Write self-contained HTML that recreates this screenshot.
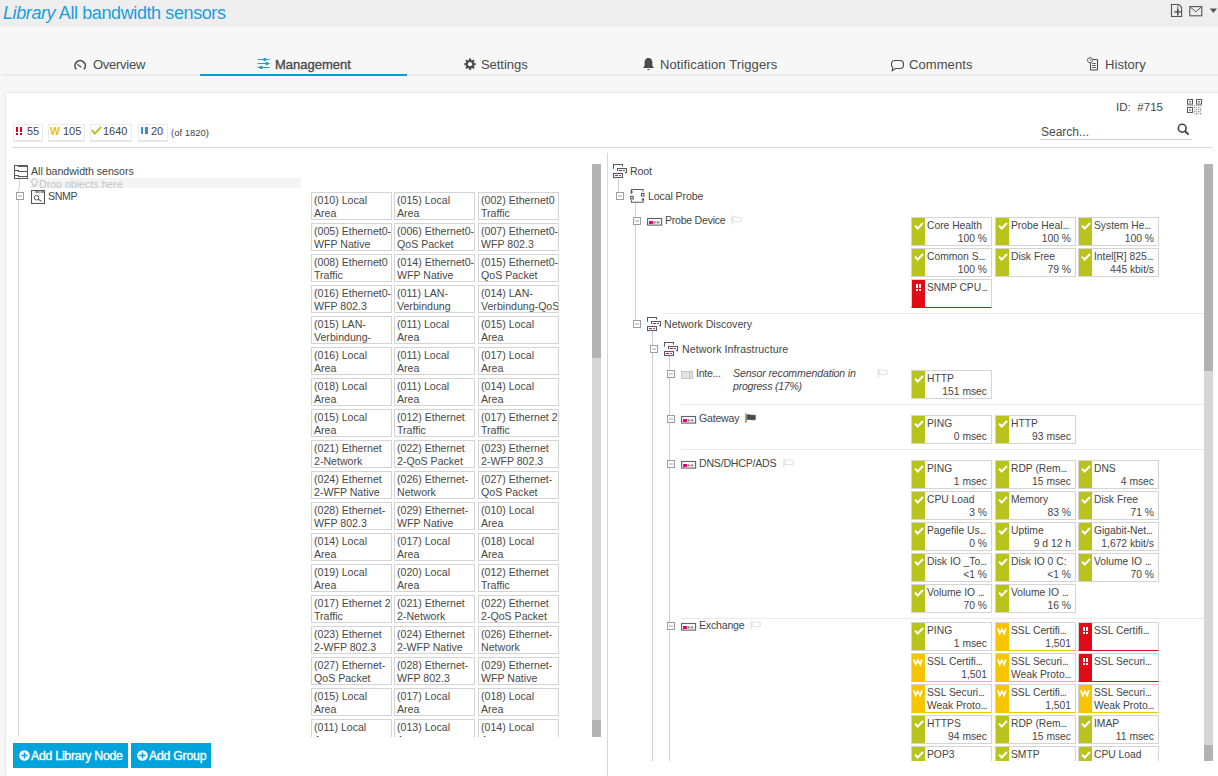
<!DOCTYPE html>
<html><head><meta charset="utf-8"><title>Library All bandwidth sensors</title>
<style>
html,body{margin:0;padding:0;}
body{width:1218px;height:776px;overflow:hidden;position:relative;background:#f7f7f7;font-family:"Liberation Sans", sans-serif;color:#3d3d3d;}
.a{position:absolute;}
.lib{width:79px;height:26px;border:1px solid #d4d4d4;font-size:10.6px;line-height:13px;color:#484848;padding:0;overflow:hidden;white-space:nowrap;}
.lib div{position:relative;left:2px;top:1px;}
.tile{width:79px;height:27px;border:1px solid #d4d4d4;background:#fff;overflow:hidden;}
.tile .bar{position:absolute;left:0;top:0;width:13px;height:28px;}
.tn{position:absolute;left:15px;top:2px;font-size:10.3px;line-height:12px;white-space:nowrap;color:#454545;}
.tv{position:absolute;top:15px;font-size:10.3px;line-height:12px;white-space:nowrap;color:#454545;}
</style></head><body>
<div class="a" style="left:0px;top:0px;width:1218px;height:27px;background:#eeeeee;"></div><div class="a" style="left:3px;top:1px;font-size:18px;letter-spacing:-0.4px;color:#1a9fdb;white-space:nowrap;line-height:24px;"><i>Library</i> All bandwidth sensors</div><svg class="a" style="left:1170px;top:3px" width="48" height="16" viewBox="0 0 48 16">
<path d="M1.5 1.5 H9 L11.6 4.3 V13.5 H1.5 Z" fill="none" stroke="#555" stroke-width="1.1"/>
<path d="M7.8 1.6 V13.4" stroke="#666" stroke-width="0.9"/>
<path d="M4.3 8.9 H11 M7.7 5.8 V12" stroke="#444" stroke-width="1.4"/>
<rect x="19.8" y="3.6" width="12" height="9.2" fill="none" stroke="#555" stroke-width="1.1"/>
<path d="M20.2 4 L25.8 8.8 L31.4 4" fill="none" stroke="#555" stroke-width="1"/>
<path d="M39.8 5.6 H47 L43.4 9.9 Z" fill="#555"/>
</svg><div class="a" style="left:2px;top:74px;width:1216px;height:2px;background:#ebebeb;"></div><div class="a" style="left:200px;top:74px;width:207px;height:2px;background:#0a9ad6;"></div><div class="a" style="left:93px;top:57px;font-size:13px;letter-spacing:-0.273px;color:#4a4a4a;line-height:16px;white-space:nowrap;">Overview</div><div class="a" style="left:275px;top:57px;font-size:13px;-webkit-text-stroke:0.35px #4a4a4a;letter-spacing:-0.009px;color:#4a4a4a;line-height:16px;white-space:nowrap;">Management</div><div class="a" style="left:481px;top:57px;font-size:13px;letter-spacing:-0.048px;color:#4a4a4a;line-height:16px;white-space:nowrap;">Settings</div><div class="a" style="left:660px;top:57px;font-size:13px;letter-spacing:0.115px;color:#4a4a4a;line-height:16px;white-space:nowrap;">Notification Triggers</div><div class="a" style="left:909px;top:57px;font-size:13px;letter-spacing:0.08px;color:#4a4a4a;line-height:16px;white-space:nowrap;">Comments</div><div class="a" style="left:1105px;top:57px;font-size:13px;letter-spacing:0.05px;color:#4a4a4a;line-height:16px;white-space:nowrap;">History</div><svg class="a" style="left:73px;top:58px" width="14" height="13" viewBox="0 0 14 13">
<path d="M3.24 11.3 A5.2 5.2 0 1 1 10.96 11.3" fill="none" stroke="#4a4a4a" stroke-width="1.6"/>
<path d="M4.2 6.3 L8.4 9.3" stroke="#4a4a4a" stroke-width="1.1"/></svg><svg class="a" style="left:257px;top:57px" width="13" height="13" viewBox="0 0 13 13">
<path d="M0.5 2.5 H12.5 M0.5 6.5 H12.5 M0.5 10.5 H12.5" stroke="#1f9fd8" stroke-width="1.2"/>
<rect x="6.5" y="1" width="2.6" height="3" fill="#1f9fd8"/>
<rect x="8.5" y="5" width="2.6" height="3" fill="#1f9fd8"/>
<rect x="2.8" y="9" width="2.6" height="3" fill="#1f9fd8"/></svg><svg class="a" style="left:464px;top:58px" width="12" height="13" viewBox="0 0 12 13">
<g fill="#4a4a4a" transform="translate(6 6.2)">
<circle r="4.2"/>
<rect x="-1.1" y="-5.7" width="2.2" height="11.4"/>
<rect x="-1.1" y="-5.7" width="2.2" height="11.4" transform="rotate(45)"/>
<rect x="-1.1" y="-5.7" width="2.2" height="11.4" transform="rotate(90)"/>
<rect x="-1.1" y="-5.7" width="2.2" height="11.4" transform="rotate(135)"/>
</g><circle cx="6" cy="6.2" r="2.1" fill="#f7f7f7"/></svg><svg class="a" style="left:642px;top:57px" width="13" height="14" viewBox="0 0 13 14">
<path d="M6.5 1 C3.5 1 2.6 3.6 2.6 6 V8.8 L1 11 H12 L10.4 8.8 V6 C10.4 3.6 9.5 1 6.5 1 Z" fill="#4a4a4a"/>
<path d="M5 12 A1.6 1.6 0 0 0 8 12 Z" fill="#4a4a4a"/></svg><svg class="a" style="left:890px;top:58px" width="15" height="14" viewBox="0 0 15 14">
<path d="M5 2.5 H10 A3.5 3.5 0 0 1 13.5 6 V7 A3.5 3.5 0 0 1 10 10.5 H5.6 L2.2 12.6 L2.8 9.6 A3.5 3.5 0 0 1 1.5 7 V6 A3.5 3.5 0 0 1 5 2.5 Z" fill="none" stroke="#4a4a4a" stroke-width="1.1"/></svg><svg class="a" style="left:1086px;top:56px" width="14" height="16" viewBox="0 0 14 16">
<rect x="4.5" y="3.5" width="7" height="10.5" rx="0.8" fill="none" stroke="#4a4a4a" stroke-width="1.1"/>
<path d="M6.2 7.5 H9.8 M6.2 9.5 H9.8 M6.2 11.5 H9.8" stroke="#4a4a4a" stroke-width="0.9"/>
<circle cx="4" cy="4.2" r="2.6" fill="#f7f7f7" stroke="#5a5a5a" stroke-width="0.9"/><path d="M4 2.8 V4.3 H5.2" fill="none" stroke="#5a5a5a" stroke-width="0.7"/></svg><div class="a" style="left:6px;top:93px;width:1218px;height:690px;background:#fff;box-shadow:0 0 3px rgba(0,0,0,0.13);"></div><div class="a" style="left:1116px;top:99px;font-size:11.6px;color:#454545;line-height:16px;white-space:pre;">ID:  #715</div><svg class="a" style="left:1186px;top:98px" width="17" height="17" viewBox="0 0 17 17">
<g fill="none" stroke="#5a5a5a" stroke-width="1"><rect x="1.5" y="1.5" width="5" height="4.6"/><rect x="10.5" y="1.5" width="5" height="4.6"/><rect x="1.5" y="9.5" width="5" height="5"/></g>
<g fill="#6a6a6a"><rect x="3.2" y="3" width="1.6" height="1.6"/><rect x="12.2" y="3" width="1.6" height="1.6"/><rect x="3.2" y="11.2" width="1.6" height="1.6"/></g>
<g fill="#8a8a8a"><rect x="1.2" y="7" width="1.2" height="1.2"/><rect x="3.4" y="7" width="1.2" height="1.2"/><rect x="5.6" y="7" width="1.2" height="1.2"/><rect x="7.8" y="7" width="1.2" height="1.2"/><rect x="10" y="7" width="1.2" height="1.2"/><rect x="12.2" y="7" width="1.2" height="1.2"/><rect x="14.4" y="7" width="1.2" height="1.2"/><rect x="8" y="9" width="1.3" height="1.3"/><rect x="10" y="9" width="1.3" height="1.3" opacity="0.5"/><rect x="12" y="9" width="1.3" height="1.3"/><rect x="14" y="9" width="1.3" height="1.3" opacity="0.5"/><rect x="8" y="11" width="1.3" height="1.3" opacity="0.5"/><rect x="10" y="11" width="1.3" height="1.3"/><rect x="12" y="11" width="1.3" height="1.3" opacity="0.5"/><rect x="14" y="11" width="1.3" height="1.3"/><rect x="8" y="13" width="1.3" height="1.3"/><rect x="10" y="13" width="1.3" height="1.3" opacity="0.5"/><rect x="12" y="13" width="1.3" height="1.3"/><rect x="14" y="13" width="1.3" height="1.3" opacity="0.5"/><rect x="8" y="15" width="1.3" height="1.3" opacity="0.5"/><rect x="10" y="15" width="1.3" height="1.3"/><rect x="12" y="15" width="1.3" height="1.3" opacity="0.5"/><rect x="14" y="15" width="1.3" height="1.3"/></g></svg><div class="a" style="left:1041px;top:125px;font-size:12px;color:#4a4a4a;line-height:14px;">Search...</div><div class="a" style="left:1040px;top:139px;width:152px;height:1px;background:#cfcfcf;"></div><svg class="a" style="left:1177px;top:123px" width="13" height="13" viewBox="0 0 13 13">
<circle cx="5.2" cy="5.2" r="3.9" fill="none" stroke="#444" stroke-width="1.6"/>
<path d="M8 8 L11.6 11.6" stroke="#444" stroke-width="2"/></svg><div class="a" style="left:13px;top:124px;width:28px;height:15px;border:1px solid #ebebeb;border-bottom:2px solid #e6e6e6;background:#fff;"></div><div class="a" style="left:48px;top:124px;width:35px;height:15px;border:1px solid #ebebeb;border-bottom:2px solid #e6e6e6;background:#fff;"></div><div class="a" style="left:90px;top:124px;width:40px;height:15px;border:1px solid #ebebeb;border-bottom:2px solid #e6e6e6;background:#fff;"></div><div class="a" style="left:138px;top:124px;width:28px;height:15px;border:1px solid #ebebeb;border-bottom:2px solid #e6e6e6;background:#fff;"></div><div class="a" style="left:16px;top:127px;width:2.4px;height:5.2px;background:#e3001b;"></div><div class="a" style="left:16px;top:133px;width:2.4px;height:2px;background:#e3001b;"></div><div class="a" style="left:20px;top:127px;width:2.4px;height:5.2px;background:#e3001b;"></div><div class="a" style="left:20px;top:133px;width:2.4px;height:2px;background:#e3001b;"></div><div class="a" style="left:27px;top:124px;font-size:11px;line-height:14px;color:#454545;white-space:nowrap;">55</div><div class="a" style="left:50px;top:124px;font-size:11px;line-height:14px;color:#454545;white-space:nowrap;"><b style="color:#f5bd00;font-size:10.5px">W</b>&nbsp;105</div><svg class="a" style="left:91px;top:126px" width="11" height="9" viewBox="0 0 11 9"><path d="M0.8 4.2 L3.8 7.6 L10.2 0.8" fill="none" stroke="#b0bf1e" stroke-width="1.8"/></svg><div class="a" style="left:103px;top:124px;font-size:11px;line-height:14px;color:#454545;white-space:nowrap;">1640</div><div class="a" style="left:141px;top:127px;width:2.4px;height:7px;background:#3f8bd6;"></div><div class="a" style="left:145.4px;top:127px;width:2.4px;height:7px;background:#3f8bd6;"></div><div class="a" style="left:151px;top:124px;font-size:11px;line-height:14px;color:#454545;white-space:nowrap;">20</div><div class="a" style="left:171px;top:127px;font-size:9.5px;line-height:12px;color:#454545;white-space:nowrap;">(of 1820)</div><div class="a" style="left:13px;top:147px;width:1200px;height:1px;background:#d9d9d9;"></div><div class="a" style="left:607px;top:153px;width:1px;height:623px;background:#d6d6d6;"></div><div class="a" style="left:592px;top:164px;width:9px;height:573px;background:#d6d6d6;"></div><div class="a" style="left:592px;top:164px;width:9px;height:194px;background:#b3b3b3;"></div><div class="a" style="left:592px;top:720px;width:9px;height:17px;background:#b3b3b3;"></div><svg class="a" style="left:14px;top:165px" width="14" height="14" viewBox="0 0 14 14">
<g fill="none" stroke="#5a5a5a" stroke-width="1.1"><rect x="0.5" y="0.5" width="13" height="13"/>
<path d="M4.5 0.5 V1.5 H13.5 M0.5 5.5 H4.5 V6.5 H13.5 M0.5 10.5 H4.5 V11.5 H13.5"/></g></svg><div class="a" style="left:31px;top:165px;font-size:10.6px;line-height:13px;color:#454545;white-space:nowrap;letter-spacing:-0.013px;">All bandwidth sensors</div><div class="a" style="left:30px;top:178px;width:271px;height:10px;background:#f4f4f4;overflow:hidden;"><div style="position:absolute;left:9px;top:0px;font-size:10.6px;line-height:13px;color:#c4c4c4;white-space:nowrap;">Drop objects here</div><svg style="position:absolute;left:1px;top:0px" width="7" height="10" viewBox="0 0 7 10"><path d="M3.5 0.8 A2.7 2.7 0 0 1 5.3 5.6 V7.2 H1.7 V5.6 A2.7 2.7 0 0 1 3.5 0.8 Z" fill="none" stroke="#c4c4c4" stroke-width="1"/><path d="M2.3 8.6 H4.7" stroke="#c4c4c4" stroke-width="1"/></svg></div><div class="a" style="left:19px;top:179px;width:1px;height:9px;background:#d4d4d4;"></div><div class="a" style="left:18px;top:189px;width:1px;height:3px;background:#d4d4d4;"></div><div class="a" style="left:18px;top:200px;width:1px;height:537px;background:#d4d4d4;"></div><div class="a" style="left:16px;top:192px;width:6px;height:6px;border:1px solid #9e9e9e;background:#fff;"><div style="position:absolute;left:1px;top:2px;width:4px;height:2px;background:#d0d0d0"></div></div><svg class="a" style="left:31px;top:190px" width="14" height="14" viewBox="0 0 14 14">
<rect x="0.5" y="0.5" width="13" height="13" fill="none" stroke="#555" stroke-width="1.1"/>
<path d="M4 2 H8.6 M9.6 2 H13" stroke="#777" stroke-width="1.6"/>
<circle cx="5.6" cy="7.7" r="2.3" fill="none" stroke="#555" stroke-width="1"/>
<path d="M7.3 9.3 L10.6 11.4" stroke="#555" stroke-width="1.1"/></svg><div class="a" style="left:48px;top:190px;font-size:10.6px;line-height:13px;color:#454545;white-space:nowrap;letter-spacing:-0.327px;">SNMP</div><div class="a" style="left:300px;top:150px;width:290px;height:587px;overflow:hidden;"><div class="a lib" style="left:11px;top:42px;"><div>(010) Local</div><div>Area</div></div><div class="a lib" style="left:94px;top:42px;"><div>(015) Local</div><div>Area</div></div><div class="a lib" style="left:178px;top:42px;"><div>(002) Ethernet0</div><div>Traffic</div></div><div class="a lib" style="left:11px;top:73px;"><div>(005) Ethernet0-</div><div>WFP Native</div></div><div class="a lib" style="left:94px;top:73px;"><div>(006) Ethernet0-</div><div>QoS Packet</div></div><div class="a lib" style="left:178px;top:73px;"><div>(007) Ethernet0-</div><div>WFP 802.3</div></div><div class="a lib" style="left:11px;top:104px;"><div>(008) Ethernet0</div><div>Traffic</div></div><div class="a lib" style="left:94px;top:104px;"><div>(014) Ethernet0-</div><div>WFP Native</div></div><div class="a lib" style="left:178px;top:104px;"><div>(015) Ethernet0-</div><div>QoS Packet</div></div><div class="a lib" style="left:11px;top:135px;"><div>(016) Ethernet0-</div><div>WFP 802.3</div></div><div class="a lib" style="left:94px;top:135px;"><div>(011) LAN-</div><div>Verbindung</div></div><div class="a lib" style="left:178px;top:135px;"><div>(014) LAN-</div><div>Verbindung-QoS</div></div><div class="a lib" style="left:11px;top:166px;"><div>(015) LAN-</div><div>Verbindung-</div></div><div class="a lib" style="left:94px;top:166px;"><div>(011) Local</div><div>Area</div></div><div class="a lib" style="left:178px;top:166px;"><div>(015) Local</div><div>Area</div></div><div class="a lib" style="left:11px;top:197px;"><div>(016) Local</div><div>Area</div></div><div class="a lib" style="left:94px;top:197px;"><div>(011) Local</div><div>Area</div></div><div class="a lib" style="left:178px;top:197px;"><div>(017) Local</div><div>Area</div></div><div class="a lib" style="left:11px;top:228px;"><div>(018) Local</div><div>Area</div></div><div class="a lib" style="left:94px;top:228px;"><div>(011) Local</div><div>Area</div></div><div class="a lib" style="left:178px;top:228px;"><div>(014) Local</div><div>Area</div></div><div class="a lib" style="left:11px;top:259px;"><div>(015) Local</div><div>Area</div></div><div class="a lib" style="left:94px;top:259px;"><div>(012) Ethernet</div><div>Traffic</div></div><div class="a lib" style="left:178px;top:259px;"><div>(017) Ethernet 2</div><div>Traffic</div></div><div class="a lib" style="left:11px;top:290px;"><div>(021) Ethernet</div><div>2-Network</div></div><div class="a lib" style="left:94px;top:290px;"><div>(022) Ethernet</div><div>2-QoS Packet</div></div><div class="a lib" style="left:178px;top:290px;"><div>(023) Ethernet</div><div>2-WFP 802.3</div></div><div class="a lib" style="left:11px;top:321px;"><div>(024) Ethernet</div><div>2-WFP Native</div></div><div class="a lib" style="left:94px;top:321px;"><div>(026) Ethernet-</div><div>Network</div></div><div class="a lib" style="left:178px;top:321px;"><div>(027) Ethernet-</div><div>QoS Packet</div></div><div class="a lib" style="left:11px;top:352px;"><div>(028) Ethernet-</div><div>WFP 802.3</div></div><div class="a lib" style="left:94px;top:352px;"><div>(029) Ethernet-</div><div>WFP Native</div></div><div class="a lib" style="left:178px;top:352px;"><div>(010) Local</div><div>Area</div></div><div class="a lib" style="left:11px;top:383px;"><div>(014) Local</div><div>Area</div></div><div class="a lib" style="left:94px;top:383px;"><div>(017) Local</div><div>Area</div></div><div class="a lib" style="left:178px;top:383px;"><div>(018) Local</div><div>Area</div></div><div class="a lib" style="left:11px;top:414px;"><div>(019) Local</div><div>Area</div></div><div class="a lib" style="left:94px;top:414px;"><div>(020) Local</div><div>Area</div></div><div class="a lib" style="left:178px;top:414px;"><div>(012) Ethernet</div><div>Traffic</div></div><div class="a lib" style="left:11px;top:445px;"><div>(017) Ethernet 2</div><div>Traffic</div></div><div class="a lib" style="left:94px;top:445px;"><div>(021) Ethernet</div><div>2-Network</div></div><div class="a lib" style="left:178px;top:445px;"><div>(022) Ethernet</div><div>2-QoS Packet</div></div><div class="a lib" style="left:11px;top:476px;"><div>(023) Ethernet</div><div>2-WFP 802.3</div></div><div class="a lib" style="left:94px;top:476px;"><div>(024) Ethernet</div><div>2-WFP Native</div></div><div class="a lib" style="left:178px;top:476px;"><div>(026) Ethernet-</div><div>Network</div></div><div class="a lib" style="left:11px;top:507px;"><div>(027) Ethernet-</div><div>QoS Packet</div></div><div class="a lib" style="left:94px;top:507px;"><div>(028) Ethernet-</div><div>WFP 802.3</div></div><div class="a lib" style="left:178px;top:507px;"><div>(029) Ethernet-</div><div>WFP Native</div></div><div class="a lib" style="left:11px;top:538px;"><div>(015) Local</div><div>Area</div></div><div class="a lib" style="left:94px;top:538px;"><div>(017) Local</div><div>Area</div></div><div class="a lib" style="left:178px;top:538px;"><div>(018) Local</div><div>Area</div></div><div class="a lib" style="left:11px;top:569px;"><div>(011) Local</div><div>Area</div></div><div class="a lib" style="left:94px;top:569px;"><div>(013) Local</div><div>Area</div></div><div class="a lib" style="left:178px;top:569px;"><div>(014) Local</div><div>Area</div></div></div><div class="a" style="left:13px;top:743px;width:115px;height:25px;background:#00a4dc;"></div><svg class="a" style="left:19px;top:750px" width="11" height="11" viewBox="0 0 11 11"><circle cx="5.5" cy="5.5" r="5.3" fill="#fff"/><path d="M5.5 2.4 V8.6 M2.4 5.5 H8.6" stroke="#00a4dc" stroke-width="1.6"/></svg><div class="a" style="left:31px;top:748px;font-size:12.3px;font-weight:normal;-webkit-text-stroke:0.35px #fff;color:#fff;line-height:16px;white-space:nowrap;letter-spacing:-0.25px;">Add Library Node</div><div class="a" style="left:131px;top:743px;width:80px;height:25px;background:#00a4dc;"></div><svg class="a" style="left:137px;top:750px" width="11" height="11" viewBox="0 0 11 11"><circle cx="5.5" cy="5.5" r="5.3" fill="#fff"/><path d="M5.5 2.4 V8.6 M2.4 5.5 H8.6" stroke="#00a4dc" stroke-width="1.6"/></svg><div class="a" style="left:149px;top:748px;font-size:12.3px;font-weight:normal;-webkit-text-stroke:0.35px #fff;color:#fff;line-height:16px;white-space:nowrap;letter-spacing:-0.25px;">Add Group</div><div class="a" style="left:1204px;top:164px;width:9px;height:597px;background:#d6d6d6;"></div><div class="a" style="left:1204px;top:164px;width:9px;height:207px;background:#b3b3b3;"></div><div class="a" style="left:1204px;top:745px;width:9px;height:16px;background:#b3b3b3;"></div><svg class="a" style="left:613px;top:164px" width="15" height="15" viewBox="0 0 15 15">
<g fill="none" stroke="#5a5a5a" stroke-width="1.1"><path d="M0.5 4.7 V0.5 H9.5 V2.4"/><path d="M4.5 7 V4.5 H13.5 V8.6 H12"/><rect x="0.5" y="9.5" width="9" height="4"/></g>
<path d="M6 6.5 H9 M2 11.5 H5" stroke="#e6007e" stroke-width="1.1"/><path d="M10 6.5 H12 M6.2 11.5 H8" stroke="#5a5a5a" stroke-width="1.1"/></svg><div class="a" style="left:630px;top:165px;font-size:10.6px;line-height:13px;color:#454545;white-space:nowrap;letter-spacing:-0.123px;">Root</div><div class="a" style="left:618px;top:179px;width:1px;height:13px;background:#cfcfcf;"></div><div class="a" style="left:616px;top:192px;width:6px;height:6px;border:1px solid #9e9e9e;background:#fff;"><div style="position:absolute;left:1px;top:2px;width:4px;height:2px;background:#d0d0d0"></div></div><svg class="a" style="left:630px;top:189px" width="15" height="15" viewBox="0 0 15 15">
<g fill="none" stroke="#5a5a5a" stroke-width="1.1"><path d="M1.5 3 V0.5 H13 V2.5"/><path d="M1.5 11.2 V13.2 H13 V10.5"/><rect x="0.6" y="7.4" width="2.6" height="2.6"/><rect x="11.4" y="4.4" width="2.6" height="2.6"/></g>
<path d="M-0.2 2.4 L1.5 5.2 L3.2 2.4 Z M11.3 11.2 L13 8.4 L14.7 11.2 Z" fill="#5a5a5a"/></svg><div class="a" style="left:648px;top:190px;font-size:10.6px;line-height:13px;color:#454545;white-space:nowrap;letter-spacing:-0.122px;">Local Probe</div><div class="a" style="left:635px;top:203px;width:1px;height:14px;background:#cfcfcf;"></div><div class="a" style="left:635px;top:225px;width:1px;height:95px;background:#cfcfcf;"></div><div class="a" style="left:633px;top:217px;width:6px;height:6px;border:1px solid #9e9e9e;background:#fff;"><div style="position:absolute;left:1px;top:2px;width:4px;height:2px;background:#d0d0d0"></div></div><svg class="a" style="left:647px;top:217px" width="16" height="9" viewBox="0 0 16 9">
<rect x="0.6" y="1.5" width="14" height="6.6" fill="#fff" stroke="#616161" stroke-width="1.1"/>
<rect x="2" y="4" width="4" height="3" fill="#e6007e"/><rect x="6" y="4" width="7" height="3" fill="#dedede"/>
<circle cx="7.6" cy="5.3" r="0.9" fill="#666"/><circle cx="11" cy="5.3" r="0.9" fill="#666"/></svg><div class="a" style="left:665px;top:214px;font-size:10.6px;line-height:13px;color:#454545;white-space:nowrap;letter-spacing:-0.266px;">Probe Device</div><svg class="a" style="left:731px;top:215px" width="12" height="10" viewBox="0 0 12 10">
<path d="M1 0.4 V9.8" stroke="#dadada" stroke-width="1"/><path d="M2.2 2 C4 1.2 5.5 2.8 10.2 2.2 V6.6 C6 7.4 4 5.8 2.2 6.6 Z" fill="none" stroke="#dadada" stroke-width="0.9"/></svg><div class="a" style="left:663px;top:313px;width:541px;height:1px;background:#eaeaea;"></div><div class="a" style="left:633px;top:320px;width:6px;height:6px;border:1px solid #9e9e9e;background:#fff;"><div style="position:absolute;left:1px;top:2px;width:4px;height:2px;background:#d0d0d0"></div></div><svg class="a" style="left:647px;top:317px" width="15" height="15" viewBox="0 0 15 15">
<g fill="none" stroke="#5a5a5a" stroke-width="1.1"><path d="M0.5 4.7 V0.5 H9.5 V2.4"/><path d="M4.5 7 V4.5 H13.5 V8.6 H12"/><rect x="0.5" y="9.5" width="9" height="4"/></g>
<path d="M6 6.5 H9 M2 11.5 H5" stroke="#e6007e" stroke-width="1.1"/><path d="M10 6.5 H12 M6.2 11.5 H8" stroke="#5a5a5a" stroke-width="1.1"/></svg><div class="a" style="left:664px;top:318px;font-size:10.6px;line-height:13px;color:#454545;white-space:nowrap;letter-spacing:-0.013px;">Network Discovery</div><div class="a" style="left:652px;top:331px;width:1px;height:14px;background:#cfcfcf;"></div><div class="a" style="left:652px;top:353px;width:1px;height:408px;background:#cfcfcf;"></div><div class="a" style="left:650px;top:345px;width:6px;height:6px;border:1px solid #9e9e9e;background:#fff;"><div style="position:absolute;left:1px;top:2px;width:4px;height:2px;background:#d0d0d0"></div></div><svg class="a" style="left:664px;top:342px" width="15" height="15" viewBox="0 0 15 15">
<g fill="none" stroke="#5a5a5a" stroke-width="1.1"><path d="M0.5 4.7 V0.5 H9.5 V2.4"/><path d="M4.5 7 V4.5 H13.5 V8.6 H12"/><rect x="0.5" y="9.5" width="9" height="4"/></g>
<path d="M6 6.5 H9 M2 11.5 H5" stroke="#e6007e" stroke-width="1.1"/><path d="M10 6.5 H12 M6.2 11.5 H8" stroke="#5a5a5a" stroke-width="1.1"/></svg><div class="a" style="left:682px;top:343px;font-size:10.6px;line-height:13px;color:#454545;white-space:nowrap;letter-spacing:0.095px;">Network Infrastructure</div><div class="a" style="left:669px;top:356px;width:1px;height:14px;background:#cfcfcf;"></div><div class="a" style="left:669px;top:378px;width:1px;height:383px;background:#cfcfcf;"></div><div class="a" style="left:667px;top:370px;width:6px;height:6px;border:1px solid #9e9e9e;background:#fff;"><div style="position:absolute;left:1px;top:2px;width:4px;height:2px;background:#d0d0d0"></div></div><svg class="a" style="left:681px;top:371px" width="13" height="9" viewBox="0 0 13 9"><rect x="0.5" y="0.5" width="11" height="7" fill="#e4e4e4" stroke="#c4c4c4"/><path d="M8.8 0.5 V7.5" stroke="#b8b8b8" stroke-width="1"/></svg><div class="a" style="left:696px;top:367px;font-size:10.6px;line-height:13px;color:#454545;white-space:nowrap;letter-spacing:-0.257px;">Inte...</div><div class="a" style="left:733px;top:367px;font-size:10.6px;line-height:12.7px;color:#454545;font-style:italic;white-space:nowrap;"><span style="letter-spacing:-0.159px">Sensor recommendation in</span><br><span style="letter-spacing:-0.252px">progress (17%)</span></div><svg class="a" style="left:877px;top:368px" width="12" height="10" viewBox="0 0 12 10">
<path d="M1 0.4 V9.8" stroke="#dadada" stroke-width="1"/><path d="M2.2 2 C4 1.2 5.5 2.8 10.2 2.2 V6.6 C6 7.4 4 5.8 2.2 6.6 Z" fill="none" stroke="#dadada" stroke-width="0.9"/></svg><div class="a" style="left:681px;top:404px;width:523px;height:1px;background:#eaeaea;"></div><div class="a" style="left:667px;top:415px;width:6px;height:6px;border:1px solid #9e9e9e;background:#fff;"><div style="position:absolute;left:1px;top:2px;width:4px;height:2px;background:#d0d0d0"></div></div><svg class="a" style="left:681px;top:415px" width="16" height="9" viewBox="0 0 16 9">
<rect x="0.6" y="1.5" width="14" height="6.6" fill="#fff" stroke="#616161" stroke-width="1.1"/>
<rect x="2" y="4" width="4" height="3" fill="#e6007e"/><rect x="6" y="4" width="7" height="3" fill="#dedede"/>
<circle cx="7.6" cy="5.3" r="0.9" fill="#666"/><circle cx="11" cy="5.3" r="0.9" fill="#666"/></svg><div class="a" style="left:699px;top:412px;font-size:10.6px;line-height:13px;color:#454545;white-space:nowrap;letter-spacing:-0.23px;">Gateway</div><svg class="a" style="left:745px;top:413px" width="12" height="10" viewBox="0 0 12 10">
<path d="M1 0.4 V9.8" stroke="#4a4a4a" stroke-width="1"/><path d="M2.2 2 C4 1.2 5.5 2.8 10.2 2.2 V6.6 C6 7.4 4 5.8 2.2 6.6 Z" fill="#4a4a4a" stroke="#4a4a4a" stroke-width="0.9"/></svg><div class="a" style="left:681px;top:449px;width:523px;height:1px;background:#eaeaea;"></div><div class="a" style="left:667px;top:460px;width:6px;height:6px;border:1px solid #9e9e9e;background:#fff;"><div style="position:absolute;left:1px;top:2px;width:4px;height:2px;background:#d0d0d0"></div></div><svg class="a" style="left:681px;top:460px" width="16" height="9" viewBox="0 0 16 9">
<rect x="0.6" y="1.5" width="14" height="6.6" fill="#fff" stroke="#616161" stroke-width="1.1"/>
<rect x="2" y="4" width="4" height="3" fill="#e6007e"/><rect x="6" y="4" width="7" height="3" fill="#dedede"/>
<circle cx="7.6" cy="5.3" r="0.9" fill="#666"/><circle cx="11" cy="5.3" r="0.9" fill="#666"/></svg><div class="a" style="left:699px;top:457px;font-size:10.6px;line-height:13px;color:#454545;white-space:nowrap;letter-spacing:-0.23px;">DNS/DHCP/ADS</div><svg class="a" style="left:783px;top:458px" width="12" height="10" viewBox="0 0 12 10">
<path d="M1 0.4 V9.8" stroke="#dadada" stroke-width="1"/><path d="M2.2 2 C4 1.2 5.5 2.8 10.2 2.2 V6.6 C6 7.4 4 5.8 2.2 6.6 Z" fill="none" stroke="#dadada" stroke-width="0.9"/></svg><div class="a" style="left:681px;top:618px;width:523px;height:1px;background:#eaeaea;"></div><div class="a" style="left:667px;top:622px;width:6px;height:6px;border:1px solid #9e9e9e;background:#fff;"><div style="position:absolute;left:1px;top:2px;width:4px;height:2px;background:#d0d0d0"></div></div><svg class="a" style="left:681px;top:622px" width="16" height="9" viewBox="0 0 16 9">
<rect x="0.6" y="1.5" width="14" height="6.6" fill="#fff" stroke="#616161" stroke-width="1.1"/>
<rect x="2" y="4" width="4" height="3" fill="#e6007e"/><rect x="6" y="4" width="7" height="3" fill="#dedede"/>
<circle cx="7.6" cy="5.3" r="0.9" fill="#666"/><circle cx="11" cy="5.3" r="0.9" fill="#666"/></svg><div class="a" style="left:699px;top:619px;font-size:10.6px;line-height:13px;color:#454545;white-space:nowrap;letter-spacing:-0.203px;">Exchange</div><svg class="a" style="left:750px;top:620px" width="12" height="10" viewBox="0 0 12 10">
<path d="M1 0.4 V9.8" stroke="#dadada" stroke-width="1"/><path d="M2.2 2 C4 1.2 5.5 2.8 10.2 2.2 V6.6 C6 7.4 4 5.8 2.2 6.6 Z" fill="none" stroke="#dadada" stroke-width="0.9"/></svg><div class="a" style="left:911px;top:217px;width:260px;height:93px;overflow:hidden;"><div class="a tile" style="left:0px;top:0px;"><div class="bar" style="background:#b8c41b"></div><svg style="position:absolute;left:2px;top:4px" width="10" height="8" viewBox="0 0 10 8"><path d="M1 3.6 L3.7 6.5 L9 1" fill="none" stroke="#fff" stroke-width="2"/></svg><div class="tn">Core Health</div><div class="tv" style="right:4px;text-align:right;">100 %</div></div><div class="a tile" style="left:84px;top:0px;"><div class="bar" style="background:#b8c41b"></div><svg style="position:absolute;left:2px;top:4px" width="10" height="8" viewBox="0 0 10 8"><path d="M1 3.6 L3.7 6.5 L9 1" fill="none" stroke="#fff" stroke-width="2"/></svg><div class="tn">Probe Heal<span style="letter-spacing:-0.9px">...</span></div><div class="tv" style="right:4px;text-align:right;">100 %</div></div><div class="a tile" style="left:167px;top:0px;"><div class="bar" style="background:#b8c41b"></div><svg style="position:absolute;left:2px;top:4px" width="10" height="8" viewBox="0 0 10 8"><path d="M1 3.6 L3.7 6.5 L9 1" fill="none" stroke="#fff" stroke-width="2"/></svg><div class="tn">System He<span style="letter-spacing:-0.9px">...</span></div><div class="tv" style="right:4px;text-align:right;">100 %</div></div><div class="a tile" style="left:0px;top:31px;"><div class="bar" style="background:#b8c41b"></div><svg style="position:absolute;left:2px;top:4px" width="10" height="8" viewBox="0 0 10 8"><path d="M1 3.6 L3.7 6.5 L9 1" fill="none" stroke="#fff" stroke-width="2"/></svg><div class="tn">Common S<span style="letter-spacing:-0.9px">...</span></div><div class="tv" style="right:4px;text-align:right;">100 %</div></div><div class="a tile" style="left:84px;top:31px;"><div class="bar" style="background:#b8c41b"></div><svg style="position:absolute;left:2px;top:4px" width="10" height="8" viewBox="0 0 10 8"><path d="M1 3.6 L3.7 6.5 L9 1" fill="none" stroke="#fff" stroke-width="2"/></svg><div class="tn">Disk Free</div><div class="tv" style="right:4px;text-align:right;">79 %</div></div><div class="a tile" style="left:167px;top:31px;"><div class="bar" style="background:#b8c41b"></div><svg style="position:absolute;left:2px;top:4px" width="10" height="8" viewBox="0 0 10 8"><path d="M1 3.6 L3.7 6.5 L9 1" fill="none" stroke="#fff" stroke-width="2"/></svg><div class="tn">Intel[R] 825<span style="letter-spacing:-0.9px">...</span></div><div class="tv" style="right:4px;text-align:right;">445 kbit/s</div></div><div class="a tile" style="left:0px;top:62px;border-bottom:1px solid #e20a14;"><div class="bar" style="background:#e20a14"></div><div style="position:absolute;left:4px;top:4px;width:2px;height:4.2px;background:#fff"></div><div style="position:absolute;left:4px;top:9.3px;width:2px;height:1.8px;background:#fff"></div><div style="position:absolute;left:7px;top:4px;width:2px;height:4.2px;background:#fff"></div><div style="position:absolute;left:7px;top:9.3px;width:2px;height:1.8px;background:#fff"></div><div class="tn">SNMP CPU<span style="letter-spacing:-0.9px">...</span></div><div class="tv" style="right:4px;text-align:right;"></div></div></div><div class="a" style="left:911px;top:370px;width:260px;height:31px;overflow:hidden;"><div class="a tile" style="left:0px;top:0px;"><div class="bar" style="background:#b8c41b"></div><svg style="position:absolute;left:2px;top:4px" width="10" height="8" viewBox="0 0 10 8"><path d="M1 3.6 L3.7 6.5 L9 1" fill="none" stroke="#fff" stroke-width="2"/></svg><div class="tn">HTTP</div><div class="tv" style="right:4px;text-align:right;">151 msec</div></div></div><div class="a" style="left:911px;top:415px;width:260px;height:31px;overflow:hidden;"><div class="a tile" style="left:0px;top:0px;"><div class="bar" style="background:#b8c41b"></div><svg style="position:absolute;left:2px;top:4px" width="10" height="8" viewBox="0 0 10 8"><path d="M1 3.6 L3.7 6.5 L9 1" fill="none" stroke="#fff" stroke-width="2"/></svg><div class="tn">PING</div><div class="tv" style="right:4px;text-align:right;">0 msec</div></div><div class="a tile" style="left:84px;top:0px;"><div class="bar" style="background:#b8c41b"></div><svg style="position:absolute;left:2px;top:4px" width="10" height="8" viewBox="0 0 10 8"><path d="M1 3.6 L3.7 6.5 L9 1" fill="none" stroke="#fff" stroke-width="2"/></svg><div class="tn">HTTP</div><div class="tv" style="right:4px;text-align:right;">93 msec</div></div></div><div class="a" style="left:911px;top:460px;width:260px;height:155px;overflow:hidden;"><div class="a tile" style="left:0px;top:0px;"><div class="bar" style="background:#b8c41b"></div><svg style="position:absolute;left:2px;top:4px" width="10" height="8" viewBox="0 0 10 8"><path d="M1 3.6 L3.7 6.5 L9 1" fill="none" stroke="#fff" stroke-width="2"/></svg><div class="tn">PING</div><div class="tv" style="right:4px;text-align:right;">1 msec</div></div><div class="a tile" style="left:84px;top:0px;"><div class="bar" style="background:#b8c41b"></div><svg style="position:absolute;left:2px;top:4px" width="10" height="8" viewBox="0 0 10 8"><path d="M1 3.6 L3.7 6.5 L9 1" fill="none" stroke="#fff" stroke-width="2"/></svg><div class="tn">RDP (Rem<span style="letter-spacing:-0.9px">...</span></div><div class="tv" style="right:4px;text-align:right;">15 msec</div></div><div class="a tile" style="left:167px;top:0px;"><div class="bar" style="background:#b8c41b"></div><svg style="position:absolute;left:2px;top:4px" width="10" height="8" viewBox="0 0 10 8"><path d="M1 3.6 L3.7 6.5 L9 1" fill="none" stroke="#fff" stroke-width="2"/></svg><div class="tn">DNS</div><div class="tv" style="right:4px;text-align:right;">4 msec</div></div><div class="a tile" style="left:0px;top:31px;"><div class="bar" style="background:#b8c41b"></div><svg style="position:absolute;left:2px;top:4px" width="10" height="8" viewBox="0 0 10 8"><path d="M1 3.6 L3.7 6.5 L9 1" fill="none" stroke="#fff" stroke-width="2"/></svg><div class="tn">CPU Load</div><div class="tv" style="right:4px;text-align:right;">3 %</div></div><div class="a tile" style="left:84px;top:31px;"><div class="bar" style="background:#b8c41b"></div><svg style="position:absolute;left:2px;top:4px" width="10" height="8" viewBox="0 0 10 8"><path d="M1 3.6 L3.7 6.5 L9 1" fill="none" stroke="#fff" stroke-width="2"/></svg><div class="tn">Memory</div><div class="tv" style="right:4px;text-align:right;">83 %</div></div><div class="a tile" style="left:167px;top:31px;"><div class="bar" style="background:#b8c41b"></div><svg style="position:absolute;left:2px;top:4px" width="10" height="8" viewBox="0 0 10 8"><path d="M1 3.6 L3.7 6.5 L9 1" fill="none" stroke="#fff" stroke-width="2"/></svg><div class="tn">Disk Free</div><div class="tv" style="right:4px;text-align:right;">71 %</div></div><div class="a tile" style="left:0px;top:62px;"><div class="bar" style="background:#b8c41b"></div><svg style="position:absolute;left:2px;top:4px" width="10" height="8" viewBox="0 0 10 8"><path d="M1 3.6 L3.7 6.5 L9 1" fill="none" stroke="#fff" stroke-width="2"/></svg><div class="tn">Pagefile Us<span style="letter-spacing:-0.9px">...</span></div><div class="tv" style="right:4px;text-align:right;">0 %</div></div><div class="a tile" style="left:84px;top:62px;"><div class="bar" style="background:#b8c41b"></div><svg style="position:absolute;left:2px;top:4px" width="10" height="8" viewBox="0 0 10 8"><path d="M1 3.6 L3.7 6.5 L9 1" fill="none" stroke="#fff" stroke-width="2"/></svg><div class="tn">Uptime</div><div class="tv" style="right:4px;text-align:right;">9 d 12 h</div></div><div class="a tile" style="left:167px;top:62px;"><div class="bar" style="background:#b8c41b"></div><svg style="position:absolute;left:2px;top:4px" width="10" height="8" viewBox="0 0 10 8"><path d="M1 3.6 L3.7 6.5 L9 1" fill="none" stroke="#fff" stroke-width="2"/></svg><div class="tn">Gigabit-Net<span style="letter-spacing:-0.9px">...</span></div><div class="tv" style="right:4px;text-align:right;">1,672 kbit/s</div></div><div class="a tile" style="left:0px;top:93px;"><div class="bar" style="background:#b8c41b"></div><svg style="position:absolute;left:2px;top:4px" width="10" height="8" viewBox="0 0 10 8"><path d="M1 3.6 L3.7 6.5 L9 1" fill="none" stroke="#fff" stroke-width="2"/></svg><div class="tn">Disk IO _To<span style="letter-spacing:-0.9px">...</span></div><div class="tv" style="right:4px;text-align:right;">&lt;1 %</div></div><div class="a tile" style="left:84px;top:93px;"><div class="bar" style="background:#b8c41b"></div><svg style="position:absolute;left:2px;top:4px" width="10" height="8" viewBox="0 0 10 8"><path d="M1 3.6 L3.7 6.5 L9 1" fill="none" stroke="#fff" stroke-width="2"/></svg><div class="tn">Disk IO 0 C:</div><div class="tv" style="right:4px;text-align:right;">&lt;1 %</div></div><div class="a tile" style="left:167px;top:93px;"><div class="bar" style="background:#b8c41b"></div><svg style="position:absolute;left:2px;top:4px" width="10" height="8" viewBox="0 0 10 8"><path d="M1 3.6 L3.7 6.5 L9 1" fill="none" stroke="#fff" stroke-width="2"/></svg><div class="tn">Volume IO <span style="letter-spacing:-0.9px">...</span></div><div class="tv" style="right:4px;text-align:right;">70 %</div></div><div class="a tile" style="left:0px;top:124px;"><div class="bar" style="background:#b8c41b"></div><svg style="position:absolute;left:2px;top:4px" width="10" height="8" viewBox="0 0 10 8"><path d="M1 3.6 L3.7 6.5 L9 1" fill="none" stroke="#fff" stroke-width="2"/></svg><div class="tn">Volume IO <span style="letter-spacing:-0.9px">...</span></div><div class="tv" style="right:4px;text-align:right;">70 %</div></div><div class="a tile" style="left:84px;top:124px;"><div class="bar" style="background:#b8c41b"></div><svg style="position:absolute;left:2px;top:4px" width="10" height="8" viewBox="0 0 10 8"><path d="M1 3.6 L3.7 6.5 L9 1" fill="none" stroke="#fff" stroke-width="2"/></svg><div class="tn">Volume IO <span style="letter-spacing:-0.9px">...</span></div><div class="tv" style="right:4px;text-align:right;">16 %</div></div></div><div class="a" style="left:911px;top:622px;width:260px;height:139px;overflow:hidden;"><div class="a tile" style="left:0px;top:0px;"><div class="bar" style="background:#b8c41b"></div><svg style="position:absolute;left:2px;top:4px" width="10" height="8" viewBox="0 0 10 8"><path d="M1 3.6 L3.7 6.5 L9 1" fill="none" stroke="#fff" stroke-width="2"/></svg><div class="tn">PING</div><div class="tv" style="right:4px;text-align:right;">1 msec</div></div><div class="a tile" style="left:84px;top:0px;border-bottom:1px solid #f6c400;"><div class="bar" style="background:#f6c400"></div><svg style="position:absolute;left:0;top:0" width="13" height="14" viewBox="0 0 13 14"><path d="M1.9 5.4 L3.7 10.6 L5.9 6.2 L8.1 10.6 L9.9 5.4" fill="none" stroke="#fff" stroke-width="1.7" stroke-linejoin="miter"/></svg><div class="tn">SSL Certifi<span style="letter-spacing:-0.9px">...</span></div><div class="tv" style="right:4px;text-align:right;">1,501</div></div><div class="a tile" style="left:167px;top:0px;border-bottom:1px solid #e20a14;"><div class="bar" style="background:#e20a14"></div><div style="position:absolute;left:4px;top:4px;width:2px;height:4.2px;background:#fff"></div><div style="position:absolute;left:4px;top:9.3px;width:2px;height:1.8px;background:#fff"></div><div style="position:absolute;left:7px;top:4px;width:2px;height:4.2px;background:#fff"></div><div style="position:absolute;left:7px;top:9.3px;width:2px;height:1.8px;background:#fff"></div><div class="tn">SSL Certifi<span style="letter-spacing:-0.9px">...</span></div><div class="tv" style="right:4px;text-align:right;"></div></div><div class="a tile" style="left:0px;top:31px;border-bottom:1px solid #f6c400;"><div class="bar" style="background:#f6c400"></div><svg style="position:absolute;left:0;top:0" width="13" height="14" viewBox="0 0 13 14"><path d="M1.9 5.4 L3.7 10.6 L5.9 6.2 L8.1 10.6 L9.9 5.4" fill="none" stroke="#fff" stroke-width="1.7" stroke-linejoin="miter"/></svg><div class="tn">SSL Certifi<span style="letter-spacing:-0.9px">...</span></div><div class="tv" style="right:4px;text-align:right;">1,501</div></div><div class="a tile" style="left:84px;top:31px;border-bottom:1px solid #f6c400;"><div class="bar" style="background:#f6c400"></div><svg style="position:absolute;left:0;top:0" width="13" height="14" viewBox="0 0 13 14"><path d="M1.9 5.4 L3.7 10.6 L5.9 6.2 L8.1 10.6 L9.9 5.4" fill="none" stroke="#fff" stroke-width="1.7" stroke-linejoin="miter"/></svg><div class="tn">SSL Securi<span style="letter-spacing:-0.9px">...</span></div><div class="tv" style="left:15px;text-align:left;">Weak Proto<span style="letter-spacing:-0.9px">...</span></div></div><div class="a tile" style="left:167px;top:31px;border-bottom:1px solid #e20a14;"><div class="bar" style="background:#e20a14"></div><div style="position:absolute;left:4px;top:4px;width:2px;height:4.2px;background:#fff"></div><div style="position:absolute;left:4px;top:9.3px;width:2px;height:1.8px;background:#fff"></div><div style="position:absolute;left:7px;top:4px;width:2px;height:4.2px;background:#fff"></div><div style="position:absolute;left:7px;top:9.3px;width:2px;height:1.8px;background:#fff"></div><div class="tn">SSL Securi<span style="letter-spacing:-0.9px">...</span></div><div class="tv" style="right:4px;text-align:right;"></div></div><div class="a tile" style="left:0px;top:62px;border-bottom:1px solid #f6c400;"><div class="bar" style="background:#f6c400"></div><svg style="position:absolute;left:0;top:0" width="13" height="14" viewBox="0 0 13 14"><path d="M1.9 5.4 L3.7 10.6 L5.9 6.2 L8.1 10.6 L9.9 5.4" fill="none" stroke="#fff" stroke-width="1.7" stroke-linejoin="miter"/></svg><div class="tn">SSL Securi<span style="letter-spacing:-0.9px">...</span></div><div class="tv" style="left:15px;text-align:left;">Weak Proto<span style="letter-spacing:-0.9px">...</span></div></div><div class="a tile" style="left:84px;top:62px;border-bottom:1px solid #f6c400;"><div class="bar" style="background:#f6c400"></div><svg style="position:absolute;left:0;top:0" width="13" height="14" viewBox="0 0 13 14"><path d="M1.9 5.4 L3.7 10.6 L5.9 6.2 L8.1 10.6 L9.9 5.4" fill="none" stroke="#fff" stroke-width="1.7" stroke-linejoin="miter"/></svg><div class="tn">SSL Certifi<span style="letter-spacing:-0.9px">...</span></div><div class="tv" style="right:4px;text-align:right;">1,501</div></div><div class="a tile" style="left:167px;top:62px;border-bottom:1px solid #f6c400;"><div class="bar" style="background:#f6c400"></div><svg style="position:absolute;left:0;top:0" width="13" height="14" viewBox="0 0 13 14"><path d="M1.9 5.4 L3.7 10.6 L5.9 6.2 L8.1 10.6 L9.9 5.4" fill="none" stroke="#fff" stroke-width="1.7" stroke-linejoin="miter"/></svg><div class="tn">SSL Securi<span style="letter-spacing:-0.9px">...</span></div><div class="tv" style="left:15px;text-align:left;">Weak Proto<span style="letter-spacing:-0.9px">...</span></div></div><div class="a tile" style="left:0px;top:93px;"><div class="bar" style="background:#b8c41b"></div><svg style="position:absolute;left:2px;top:4px" width="10" height="8" viewBox="0 0 10 8"><path d="M1 3.6 L3.7 6.5 L9 1" fill="none" stroke="#fff" stroke-width="2"/></svg><div class="tn">HTTPS</div><div class="tv" style="right:4px;text-align:right;">94 msec</div></div><div class="a tile" style="left:84px;top:93px;"><div class="bar" style="background:#b8c41b"></div><svg style="position:absolute;left:2px;top:4px" width="10" height="8" viewBox="0 0 10 8"><path d="M1 3.6 L3.7 6.5 L9 1" fill="none" stroke="#fff" stroke-width="2"/></svg><div class="tn">RDP (Rem<span style="letter-spacing:-0.9px">...</span></div><div class="tv" style="right:4px;text-align:right;">15 msec</div></div><div class="a tile" style="left:167px;top:93px;"><div class="bar" style="background:#b8c41b"></div><svg style="position:absolute;left:2px;top:4px" width="10" height="8" viewBox="0 0 10 8"><path d="M1 3.6 L3.7 6.5 L9 1" fill="none" stroke="#fff" stroke-width="2"/></svg><div class="tn">IMAP</div><div class="tv" style="right:4px;text-align:right;">11 msec</div></div><div class="a tile" style="left:0px;top:124px;"><div class="bar" style="background:#b8c41b"></div><svg style="position:absolute;left:2px;top:4px" width="10" height="8" viewBox="0 0 10 8"><path d="M1 3.6 L3.7 6.5 L9 1" fill="none" stroke="#fff" stroke-width="2"/></svg><div class="tn">POP3</div><div class="tv" style="right:4px;text-align:right;">1 msec</div></div><div class="a tile" style="left:84px;top:124px;"><div class="bar" style="background:#b8c41b"></div><svg style="position:absolute;left:2px;top:4px" width="10" height="8" viewBox="0 0 10 8"><path d="M1 3.6 L3.7 6.5 L9 1" fill="none" stroke="#fff" stroke-width="2"/></svg><div class="tn">SMTP</div><div class="tv" style="right:4px;text-align:right;">1 msec</div></div><div class="a tile" style="left:167px;top:124px;"><div class="bar" style="background:#b8c41b"></div><svg style="position:absolute;left:2px;top:4px" width="10" height="8" viewBox="0 0 10 8"><path d="M1 3.6 L3.7 6.5 L9 1" fill="none" stroke="#fff" stroke-width="2"/></svg><div class="tn">CPU Load</div><div class="tv" style="right:4px;text-align:right;">3 %</div></div></div>
</body></html>
